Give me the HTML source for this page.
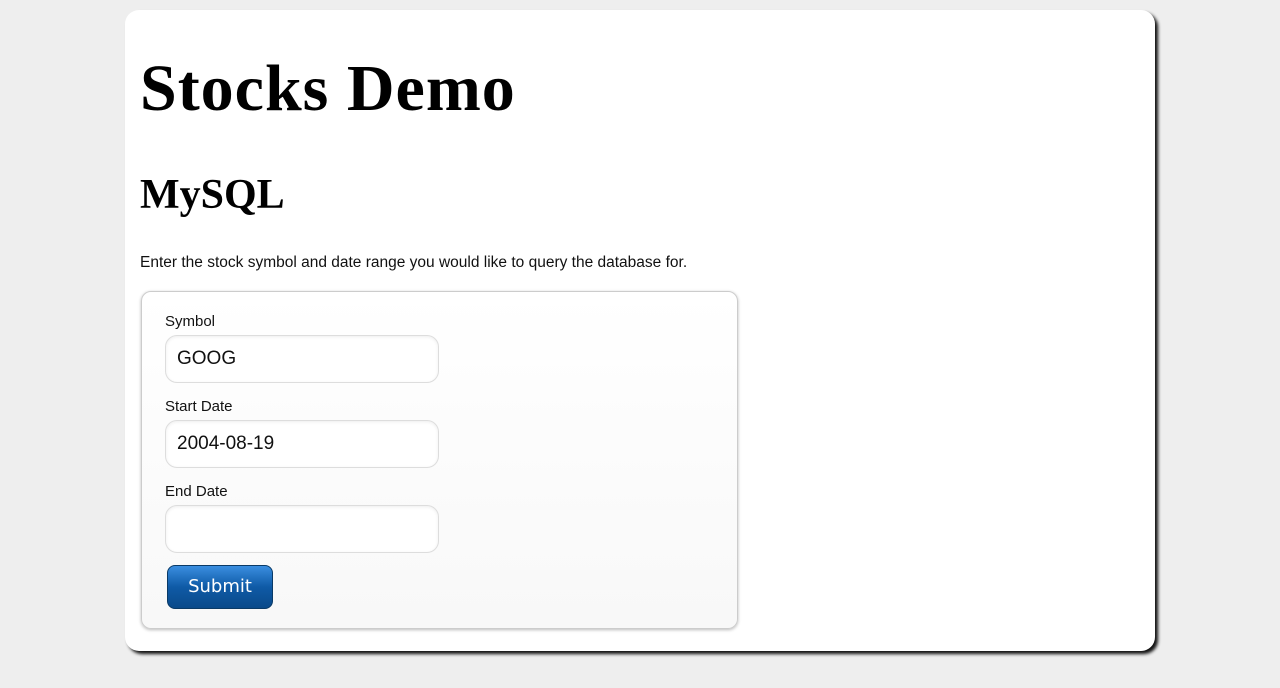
<!DOCTYPE html>
<html><head><style>
body{margin:0;background:#eee;width:1280px;height:688px;overflow:hidden;font-family:"Liberation Sans",sans-serif;}
.card{position:absolute;left:125px;top:10px;width:1030px;height:641px;background:#fff;border-radius:14px;box-shadow:3px 3px 3px #111;}
h1{position:absolute;left:15px;top:44px;margin:0;font-family:"Liberation Serif",serif;font-weight:bold;font-size:66px;line-height:70px;letter-spacing:1px;}
h2{position:absolute;left:15px;top:160px;margin:0;font-family:"Liberation Serif",serif;font-weight:bold;font-size:42px;line-height:50px;}
p{position:absolute;left:15px;top:244px;margin:0;font-size:15.5px;color:#111;}
.form{position:absolute;left:16px;top:281px;width:595px;height:336px;border:1px solid #ccc;border-radius:10px;background:linear-gradient(#fff,#f8f8f8);box-shadow:0 1px 3px #bbb;}
label{position:absolute;left:23px;font-size:15px;color:#111;}
.in{position:absolute;left:23px;width:274px;height:48px;border:1px solid #ddd;border-radius:12px;background:#fff;box-shadow:inset 0 1px 3px #eee;font-size:19px;line-height:46px;padding-left:11px;box-sizing:border-box;color:#111;}
.btn{position:absolute;left:25px;top:273px;width:106px;height:44px;border-radius:8px;border:1px solid #0a3a66;background:linear-gradient(#3a8ee0,#0f5aa6 50%,#0a4a8a);color:#fff;font-family:"DejaVu Sans",sans-serif;font-size:18px;text-align:center;line-height:42px;box-sizing:border-box;}
</style></head><body>
<div class="card">
<h1>Stocks Demo</h1>
<h2>MySQL</h2>
<p>Enter the stock symbol and date range you would like to query the database for.</p>
<div class="form">
<label style="top:21px">Symbol</label>
<div class="in" style="top:43px">GOOG</div>
<label style="top:106px">Start Date</label>
<div class="in" style="top:128px">2004-08-19</div>
<label style="top:191px">End Date</label>
<div class="in" style="top:213px"></div>
<div class="btn">Submit</div>
</div>
</div>
</body></html>
